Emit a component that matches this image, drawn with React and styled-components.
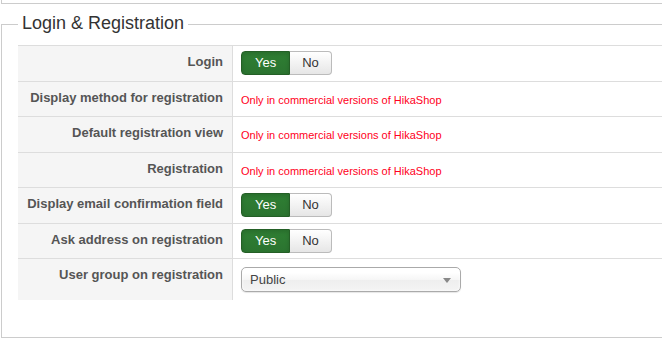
import React from 'react'
import styled, { createGlobalStyle } from 'styled-components'

const GlobalStyle = createGlobalStyle`
  html, body {
    margin: 0;
    padding: 0;
    background: #fff;
    overflow: hidden;
  }
  body {
    font-family: "Liberation Sans", Arial, sans-serif;
    font-size: 13px;
    color: #333;
  }
`

const Page = styled.div`
  width: 720px;
  padding-left: 1px;
`

const PrevBox = styled.div`
  height: 3px;
  border-left: 1px solid #ccc;
  border-bottom: 1px solid #ccc;
`

const Fieldset = styled.fieldset`
  margin: 9px 0 0 0;
  padding: 9px 0 37px 16px;
  border: 1px solid #ccc;
  min-width: 0;
`

const Legend = styled.legend`
  padding: 0 4px 3px;
  margin: 0;
  font-size: 18px;
  line-height: 20px;
  color: #333;
`

const Table = styled.div`
  display: flex;
  flex-direction: column;
`

const Row = styled.div`
  display: grid;
  grid-template-columns: 215px 1fr;
  border-top: 1px solid #ddd;
`

const Label = styled.div`
  background: #f5f5f5;
  border-right: 1px solid #ddd;
  padding: 7px 9px 0 0;
  text-align: right;
  font-size: 13px;
  line-height: 18px;
  font-weight: bold;
  color: #555;
`

const Value = styled.div`
  box-sizing: border-box;
  min-height: ${p => (p.$tall ? '41px' : '34.5px')};
  padding: ${p => (p.$tall ? '8px 8px 0' : '0 8px')};
  display: flex;
  align-items: ${p => (p.$tall ? 'flex-start' : 'center')};
`

const Notice = styled.span`
  color: #ff0022;
  font-size: 11px;
  line-height: 14px;
  padding-top: 2px;
`

const Toggle = styled.div`
  display: inline-flex;
`

const ToggleButton = styled.button`
  font-family: "Liberation Sans", Arial, sans-serif;
  font-size: 13px;
  height: 24px;
  line-height: 22px;
  padding: 0 12px;
  margin: 0;
  cursor: pointer;
  border: 1px solid ${p => (p.$on ? '#245f26' : '#bbb')};
  color: ${p => (p.$on ? '#fff' : '#333')};
  background: ${p =>
    p.$on
      ? 'linear-gradient(#2f7f33, #2b7430)'
      : 'linear-gradient(#fff, #e6e6e6)'};
  box-shadow: ${p =>
    p.$on ? 'inset 0 2px 4px rgba(0,0,0,0.15)' : 'inset 0 1px 0 rgba(255,255,255,0.2)'};
  &:first-child {
    border-radius: 4px 0 0 4px;
    padding: 0 13px;
  }
  &:last-child {
    border-radius: 0 4px 4px 0;
    border-left: none;
  }
`

const Select = styled.div`
  position: relative;
  box-sizing: border-box;
  width: 220px;
  height: 25px;
  padding-left: 8px;
  border: 1px solid #aaa;
  border-radius: 5px;
  background: linear-gradient(#fff 20%, #f6f6f6 50%, #eee 52%, #f4f4f4 100%);
  box-shadow: inset 0 0 3px #fff, 0 1px 1px rgba(0, 0, 0, 0.1);
  font-size: 13px;
  line-height: 23px;
  color: #444;
`

const Caret = styled.span`
  position: absolute;
  right: 9px;
  top: 10px;
  width: 0;
  height: 0;
  border-left: 4px solid transparent;
  border-right: 4px solid transparent;
  border-top: 5px solid #888;
`

const YesNo = () => (
  <Toggle>
    <ToggleButton $on>Yes</ToggleButton>
    <ToggleButton>No</ToggleButton>
  </Toggle>
)

const commercial = 'Only in commercial versions of HikaShop'

const rows = [
  { label: 'Login', kind: 'toggle' },
  { label: 'Display method for registration', kind: 'notice' },
  { label: 'Default registration view', kind: 'notice' },
  { label: 'Registration', kind: 'notice' },
  { label: 'Display email confirmation field', kind: 'toggle' },
  { label: 'Ask address on registration', kind: 'toggle' },
  { label: 'User group on registration', kind: 'select' },
]

export default function App() {
  return (
    <Page>
      <GlobalStyle />
      <PrevBox />
      <Fieldset>
        <Legend>Login &amp; Registration</Legend>
        <Table>
          {rows.map(row => (
            <Row key={row.label}>
              <Label>{row.label}</Label>
              <Value $tall={row.kind === 'select'}>
                {row.kind === 'toggle' && <YesNo />}
                {row.kind === 'notice' && <Notice>{commercial}</Notice>}
                {row.kind === 'select' && (
                  <Select>
                    Public
                    <Caret />
                  </Select>
                )}
              </Value>
            </Row>
          ))}
        </Table>
      </Fieldset>
    </Page>
  )
}
